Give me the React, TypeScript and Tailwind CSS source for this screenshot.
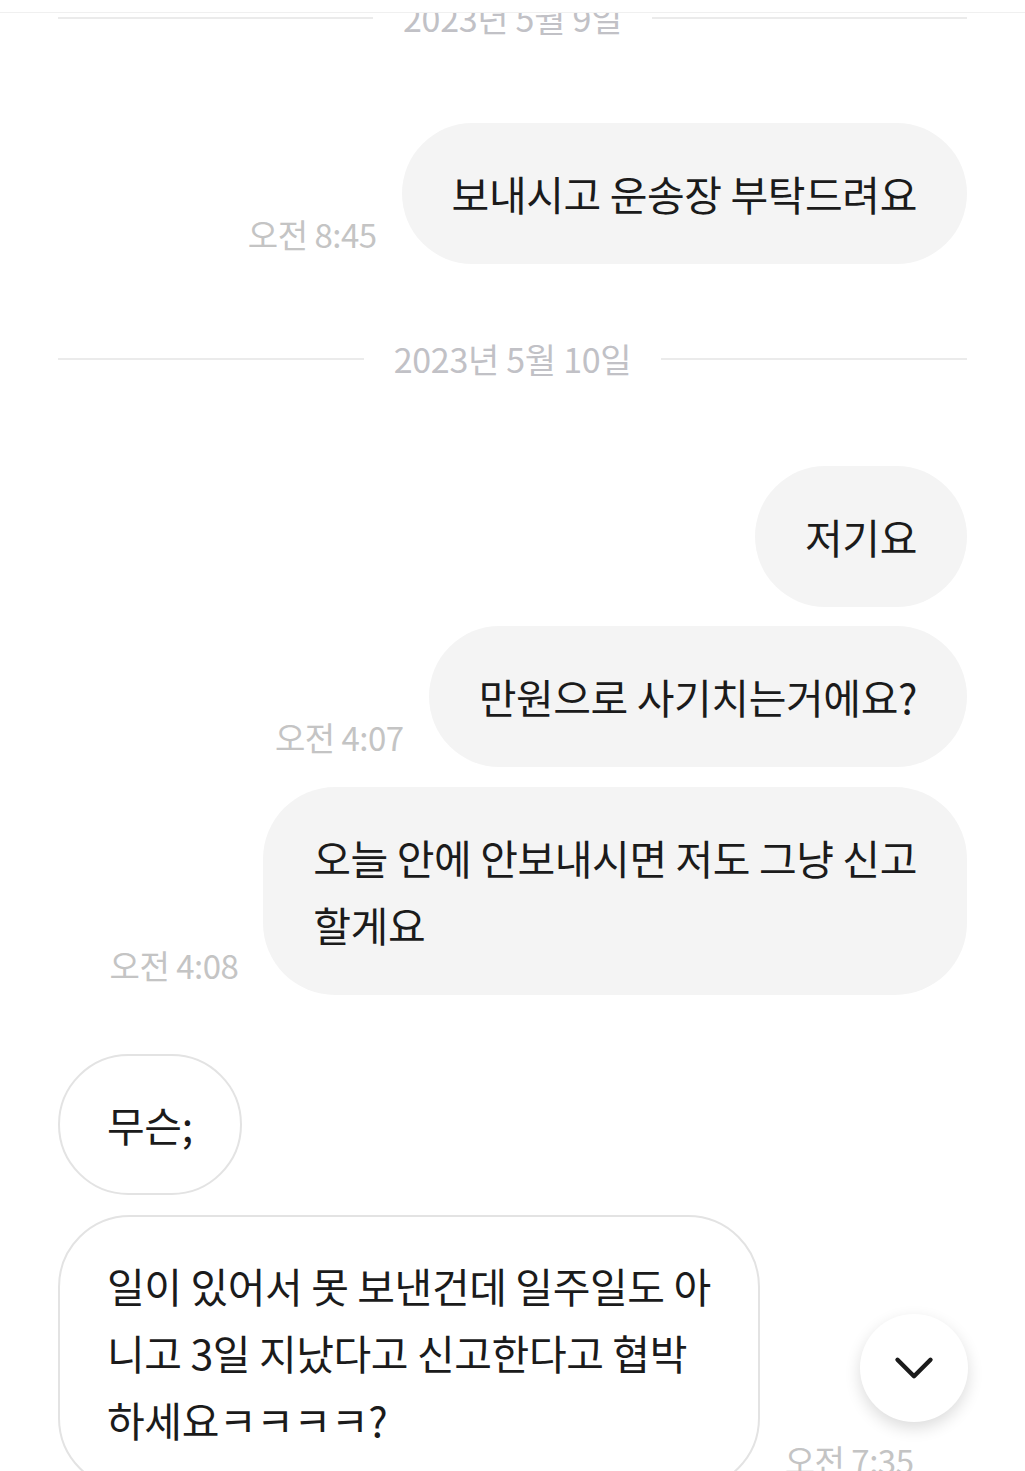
import { ChevronDown } from "lucide-react";

type Msg = { side: "me" | "them"; lines: string[]; time?: string; mt: string };

function DateDivider({ label, className = "" }: { label: string; className?: string }) {
  return (
    <div className={`flex items-center gap-[30px] ${className}`}>
      <div className="h-[2px] flex-1 bg-[#ebebeb]" />
      <span className="text-[34px] leading-[36px] tracking-[-0.3px] text-[#c1c1c6]">{label}</span>
      <div className="h-[2px] flex-1 bg-[#ebebeb]" />
    </div>
  );
}

function Bubble({ msg }: { msg: Msg }) {
  const mine = msg.side === "me";
  const time = msg.time ? (
    <span className="mb-[12px] shrink-0 text-[33px] leading-[36px] tracking-[-0.5px] text-[#c4c4c4]">{msg.time}</span>
  ) : null;
  return (
    <div className={`flex items-end gap-[25px] ${mine ? "justify-end" : "justify-start"} ${msg.mt}`}>
      {mine && time}
      <div
        className={`rounded-[72px] text-[41px] leading-[67px] tracking-[-0.4px] text-[#1b1b1b] ${
          mine ? "bg-[#f4f4f4] px-[50px] py-[37px]" : "border-2 border-[#e3e3e3] bg-white px-[47px] py-[35px]"
        }`}
      >
        {msg.lines.map((line, i) => (
          <div key={i} className="whitespace-nowrap">{line}</div>
        ))}
      </div>
      {!mine && time}
    </div>
  );
}

const day9: Msg[] = [{ side: "me", lines: ["보내시고 운송장 부탁드려요"], time: "오전 8:45", mt: "mt-[87px]" }];

const day10: Msg[] = [
  { side: "me", lines: ["저기요"], mt: "mt-[89px]" },
  { side: "me", lines: ["만원으로 사기치는거에요?"], time: "오전 4:07", mt: "mt-[19px]" },
  { side: "me", lines: ["오늘 안에 안보내시면 저도 그냥 신고", "할게요"], time: "오전 4:08", mt: "mt-[20px]" },
  { side: "them", lines: ["무슨;"], mt: "mt-[59px]" },
  {
    side: "them",
    lines: ["일이 있어서 못 보낸건데 일주일도 아", "니고 3일 지났다고 신고한다고 협박", "하세요ㅋㅋㅋㅋ?"],
    time: "오전 7:35",
    mt: "mt-[20px]",
  },
];

export default function App() {
  return (
    <div className="relative h-[1471px] w-full overflow-hidden bg-white font-['Noto_Sans_CJK_KR','Noto_Sans',sans-serif]">
      <div className="px-[58px]">
        <DateDivider label="2023년 5월 9일" />
        {day9.map((m, i) => (
          <Bubble key={i} msg={m} />
        ))}
        <DateDivider label="2023년 5월 10일" className="mt-[77px]" />
        {day10.map((m, i) => (
          <Bubble key={i} msg={m} />
        ))}
      </div>

      {/* header edge over the scrolled list */}
      <div className="absolute inset-x-0 top-0 h-[13px] border-b border-[#f0f0f0] bg-white" />

      <button className="absolute left-[860px] top-[1314px] flex h-[108px] w-[108px] items-center justify-center rounded-full bg-white shadow-[0_6px_16px_rgba(0,0,0,0.14)]">
        <ChevronDown className="h-[66px] w-[66px] text-[#1b1b1b]" strokeWidth={1.6} />
      </button>
    </div>
  );
}
